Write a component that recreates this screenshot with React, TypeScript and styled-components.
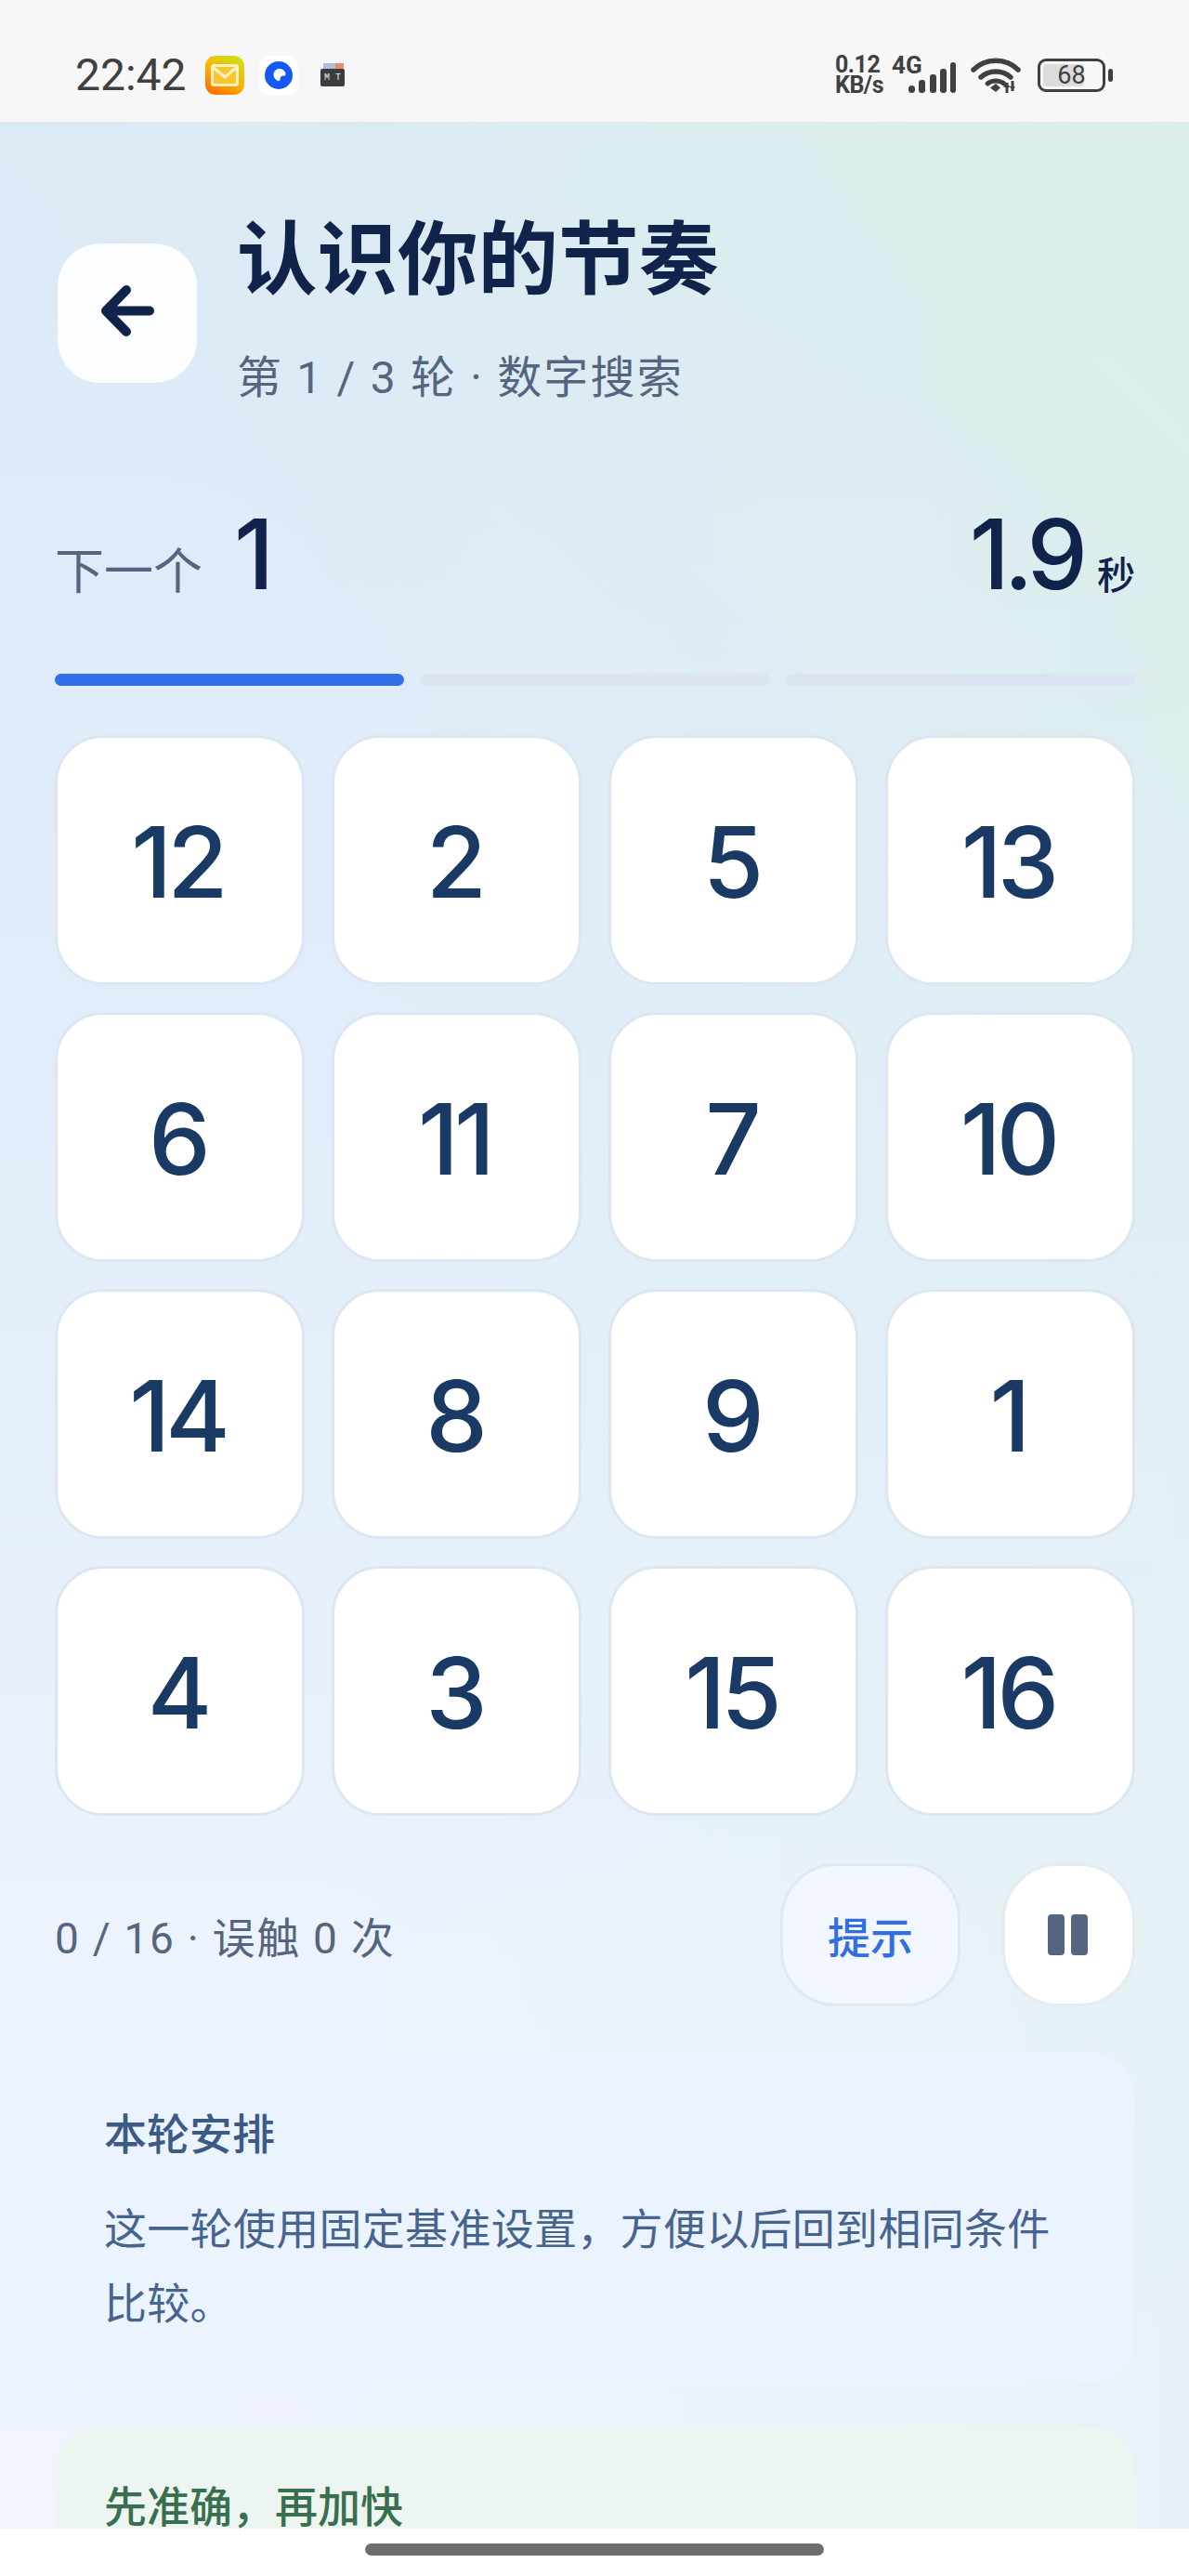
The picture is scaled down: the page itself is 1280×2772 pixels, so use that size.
import React from 'react';
import styled, { createGlobalStyle } from 'styled-components';

const TILES = [12, 2, 5, 13, 6, 11, 7, 10, 14, 8, 9, 1, 4, 3, 15, 16];

const GlobalStyle = createGlobalStyle`
  html, body {
    margin: 0;
    padding: 0;
  }
  body {
    font-family: Roboto, "Noto Sans CJK SC", sans-serif;
  }
`;

const App: React.FC = () => {
  return (
    <Screen lang="zh-CN">
      <GlobalStyle />
      <StatusBar>
        <StatusLeft>
          <Clock>22:42</Clock>
          <MailIcon>
            <svg width="30" height="24" viewBox="0 0 30 24" fill="none">
              <rect x="1.5" y="1.5" width="27" height="21" rx="2" stroke="#fff3c4" strokeWidth="3" fill="#f9c530" />
              <path d="M3 4l12 10L27 4" stroke="#fff3c4" strokeWidth="3" />
            </svg>
          </MailIcon>
          <NoticeIcon>
            <svg width="30" height="30" viewBox="0 0 30 30">
              <circle cx="15" cy="15" r="15" fill="#1459f0" />
              <path d="M15.5 8c4 0 7 2.500 7 6 0 1-1 1.500-2 1.500-2.500 0-4 1.500-4 4 0 1.500-1.500 2-2.500 1.500-3-1.500-4.500-4-4.500-6.500 0-3.500 2.500-6.500 6-6.500z" fill="#fff" />
            </svg>
          </NoticeIcon>
          <ToolIcon>
            <ToolPaper />
            <ToolLabel>M T</ToolLabel>
          </ToolIcon>
        </StatusLeft>
        <StatusRight>
          <NetSpeed>
            <span>0.12</span>
            <span>KB/s</span>
          </NetSpeed>
          <SignalWrap>
            <NetType>4G</NetType>
            <svg width="52" height="34" viewBox="0 0 52 34" fill="#404040">
              <rect x="0" y="25" width="7" height="8" rx="3.500" />
              <rect x="11" y="19" width="7" height="14" rx="3" />
              <rect x="23" y="13" width="7" height="20" rx="3" />
              <rect x="34" y="7" width="7" height="26" rx="3" />
              <rect x="45" y="0" width="6" height="33" rx="3" />
            </svg>
          </SignalWrap>
          <svg width="54" height="40" viewBox="0 0 54 40" fill="none">
            <path d="M3 14C16 1 38 1 51 14" stroke="#404040" strokeWidth="5.500" strokeLinecap="round" />
            <path d="M11 22c9-8 23-8 32 0" stroke="#404040" strokeWidth="5.500" strokeLinecap="round" />
            <path d="M18 29c5-4 13-4 18 0" stroke="#404040" strokeWidth="5" strokeLinecap="round" />
            <path d="M27 29l-6 4.500 6 4.500 5-4.500z" fill="#404040" />
            <path d="M39 28v11M45 26v11" stroke="#404040" strokeWidth="3" />
            <path d="M35 33l4-4 4 4M42 32l3 4 3-4" fill="#404040" />
          </svg>
          <Battery>
            <BatteryBody>
              <BatteryFill />
              <BatteryValue>68</BatteryValue>
            </BatteryBody>
            <BatteryNub />
          </Battery>
        </StatusRight>
      </StatusBar>

      <Main>
        <Header>
          <BackButton>
            <svg width="58" height="55" viewBox="0 0 58 55" fill="none">
              <path d="M28 5L6 27.500 28 50M6 27.500h47" stroke="#10234a" strokeWidth="10" strokeLinecap="round" strokeLinejoin="round" />
            </svg>
          </BackButton>
          <HeaderText>
            <Title>认识你的节奏</Title>
            <Subtitle>第 1 / 3 轮 · 数字搜索</Subtitle>
          </HeaderText>
        </Header>

        <TargetRow>
          <TargetGroup>
            <TargetLabel>下一个</TargetLabel>
            <BigValue>1</BigValue>
          </TargetGroup>
          <TargetGroup>
            <BigValue>1.9</BigValue>
            <Unit>秒</Unit>
          </TargetGroup>
        </TargetRow>

        <Progress>
          <ProgressStep $active />
          <ProgressStep />
          <ProgressStep />
        </Progress>

        <TileGrid>
          {TILES.map(tile => (
            <Tile key={tile}>{tile}</Tile>
          ))}
        </TileGrid>

        <ControlRow>
          <Counter>0 / 16 · 误触 0 次</Counter>
          <Controls>
            <HintButton>提示</HintButton>
            <PauseButton>
              <PauseBar />
              <PauseBar />
            </PauseButton>
          </Controls>
        </ControlRow>

        <InfoCard>
          <InfoTitle>本轮安排</InfoTitle>
          <InfoBody>这一轮使用固定基准设置，方便以后回到相同条件比较。</InfoBody>
        </InfoCard>

        <InfoCard $green>
          <InfoTitle $green>先准确，再加快</InfoTitle>
        </InfoCard>
      </Main>

      <NavBar>
        <NavPill />
      </NavBar>
    </Screen>
  );
};

export default App;

const Screen = styled.div`
  position: relative;
  width: 1280px;
  height: 2772px;
  overflow: hidden;
  background: #f2f6fc;
`;

const StatusBar = styled.div`
  display: flex;
  align-items: center;
  justify-content: space-between;
  height: 131px;
  padding: 31px 82px 0 81px;
  box-sizing: border-box;
  background: #f7f7f7;
`;

const StatusLeft = styled.div`
  display: flex;
  align-items: center;
  gap: 16px;
`;

const Clock = styled.span`
  width: 124px;
  font-family: Roboto, sans-serif;
  font-size: 48px;
  line-height: 42px;
  color: #3f3f3f;
`;

const AppIcon = styled.div`
  position: relative;
  display: flex;
  align-items: center;
  justify-content: center;
  width: 42px;
  height: 42px;
  border-radius: 11px;
  overflow: hidden;
`;

const MailIcon = styled(AppIcon)`
  background: linear-gradient(30deg, #ff7300 10%, #fbb400 50%, #c8e61e 100%);
`;

const NoticeIcon = styled(AppIcon)`
  background: #fff;
`;

const ToolIcon = styled(AppIcon)`
  background: #f5f6fa;
`;

const ToolPaper = styled.div`
  position: absolute;
  top: 8px;
  left: 11px;
  width: 22px;
  height: 12px;
  background: linear-gradient(90deg, #b3bedb 60%, #e58f70 60%);
`;

const ToolLabel = styled.div`
  position: absolute;
  left: 8px;
  top: 14px;
  width: 26px;
  height: 19px;
  border-radius: 2px;
  background: #3c3c3c;
  color: #eee;
  font-family: "Liberation Mono", monospace;
  font-size: 10px;
  line-height: 19px;
  text-align: center;
`;

const StatusRight = styled.div`
  display: flex;
  align-items: center;
`;

const NetSpeed = styled.div`
  display: flex;
  flex-direction: column;
  width: 61px;
  font-family: Roboto, sans-serif;
  font-weight: 700;
  font-size: 25px;
  line-height: 22px;
  letter-spacing: -0.5px;
  color: #404040;
`;

const SignalWrap = styled.div`
  position: relative;
  display: flex;
  margin: 6px 15px 0 18px;
`;

const NetType = styled.span`
  position: absolute;
  top: -8px;
  left: -18px;
  font-family: Roboto, sans-serif;
  font-weight: 700;
  font-size: 26px;
  line-height: 22px;
  color: #404040;
`;

const Battery = styled.div`
  display: flex;
  align-items: center;
  gap: 3px;
  margin-left: 18px;
`;

const BatteryBody = styled.div`
  position: relative;
  display: flex;
  align-items: center;
  justify-content: center;
  box-sizing: border-box;
  width: 73px;
  height: 36px;
  border: 3.5px solid #404040;
  border-radius: 9px;
`;

const BatteryFill = styled.div`
  position: absolute;
  top: 3px;
  left: 3px;
  bottom: 3px;
  width: 44px;
  border-radius: 3px;
  background: #dcdcdc;
`;

const BatteryValue = styled.span`
  position: relative;
  font-family: Roboto, sans-serif;
  font-size: 27px;
  line-height: 1;
  color: #404040;
`;

const BatteryNub = styled.div`
  width: 5px;
  height: 14px;
  border-radius: 3px;
  background: #404040;
`;

const Main = styled.main`
  height: 2641px;
  padding: 90px 58px 0 59px;
  box-sizing: border-box;
  background:
    linear-gradient(225deg, rgba(218, 239, 230, 0.65) 0%, rgba(218, 239, 230, 0) 38%),
    linear-gradient(90deg, rgba(220, 239, 234, 0) 25%, rgba(220, 239, 234, 0.35) 100%),
    linear-gradient(180deg, #dce9f7 0%, #e1edfa 40%, #ecf3fc 75%, #eff4fd 100%);
`;

const Header = styled.header`
  display: flex;
  align-items: flex-start;
  gap: 43px;
`;

const BackButton = styled.button`
  display: flex;
  align-items: center;
  justify-content: center;
  flex: none;
  width: 150px;
  height: 150px;
  margin: 41px 0 0 3px;
  padding: 0 0 5px;
  border: none;
  border-radius: 46px;
  background: #fbfdff;
`;

const HeaderText = styled.div`
  display: flex;
  flex-direction: column;
`;

const Title = styled.h1`
  margin: 2px 0 0;
  font-family: "Noto Sans CJK SC", sans-serif;
  font-size: 86.5px;
  font-weight: 700;
  line-height: 100px;
  color: #10234a;
`;

const Subtitle = styled.div`
  margin-top: 54px;
  font-size: 48px;
  line-height: 60px;
  letter-spacing: 2.2px;
  color: #55657f;
`;

const TargetRow = styled.div`
  display: flex;
  align-items: baseline;
  justify-content: space-between;
  margin-top: 101px;
  height: 116px;
`;

const TargetGroup = styled.div`
  display: flex;
  align-items: baseline;
`;

const TargetLabel = styled.span`
  margin-right: 34px;
  font-size: 53px;
  color: #55657f;
`;

const BigValue = styled.span`
  font-family: Inter, sans-serif;
  font-size: 104px;
  font-weight: 550;
  line-height: 116px;
  letter-spacing: -6px;
  color: #10234a;
`;

const Unit = styled.span`
  margin-left: 16px;
  font-size: 41px;
  font-weight: 500;
  color: #10234a;
`;

const Progress = styled.div`
  display: grid;
  grid-template-columns: repeat(3, 1fr);
  gap: 17px;
  margin-top: 71px;
`;

const ProgressStep = styled.div<{ $active?: boolean }>`
  height: 13px;
  border-radius: 7px;
  background: ${props => (props.$active ? '#316fe8' : '#dce4f2')};
`;

const TileGrid = styled.div`
  display: grid;
  grid-template-columns: repeat(4, 1fr);
  gap: 29px;
  margin-top: 53px;
`;

const Tile = styled.div`
  display: flex;
  align-items: center;
  justify-content: center;
  box-sizing: border-box;
  height: 269px;
  padding: 4px 5px 0 0;
  border: 3px solid #dce6f2;
  border-radius: 52px;
  background: #fff;
  font-family: Inter, sans-serif;
  font-size: 106px;
  font-weight: 550;
  letter-spacing: -5px;
  color: #1a3a66;
`;

const ControlRow = styled.div`
  display: flex;
  align-items: center;
  justify-content: space-between;
  margin-top: 51px;
`;

const Counter = styled.div`
  font-size: 46px;
  letter-spacing: 1.7px;
  color: #55657f;
`;

const Controls = styled.div`
  display: flex;
  gap: 45px;
`;

const HintButton = styled.button`
  width: 194px;
  height: 154px;
  padding: 0;
  border: 3px solid #dfe8f4;
  border-radius: 60px;
  background: #f2f6fd;
  font-family: "Noto Sans CJK SC", sans-serif;
  font-size: 46px;
  font-weight: 500;
  color: #316fe0;
`;

const PauseButton = styled.button`
  display: flex;
  align-items: center;
  justify-content: center;
  gap: 7px;
  width: 143px;
  height: 154px;
  padding: 0 2px 0 0;
  border: 3px solid #e3ebf5;
  border-radius: 60px;
  background: #fff;
`;

const PauseBar = styled.span`
  width: 18px;
  height: 44px;
  border-radius: 4px;
  background: #536580;
`;

const InfoCard = styled.section<{ $green?: boolean }>`
  height: ${props => (props.$green ? '200px' : '357px')};
  margin-top: ${props => (props.$green ? '46px' : '49px')};
  padding: ${props => (props.$green ? '48px' : '50px')} 52px 0 53px;
  box-sizing: border-box;
  border-radius: 50px;
  background: ${props => (props.$green ? '#ecf5f0' : '#ebf3fe')};
`;

const InfoTitle = styled.div<{ $green?: boolean }>`
  font-family: "Noto Sans CJK SC", sans-serif;
  font-size: 46px;
  font-weight: 500;
  line-height: 70px;
  color: ${props => (props.$green ? '#38704f' : '#3c5a86')};
`;

const InfoBody = styled.p`
  margin: 27px 0 0;
  font-family: "Noto Sans CJK SC", sans-serif;
  font-size: 46px;
  line-height: 80px;
  letter-spacing: 0.3px;
  color: #47648f;
`;

const NavBar = styled.div`
  position: absolute;
  left: 0;
  right: 0;
  bottom: 0;
  display: flex;
  justify-content: center;
  height: 51px;
  padding-top: 16px;
  box-sizing: border-box;
  background: #fff;
`;

const NavPill = styled.div`
  width: 494px;
  height: 13px;
  border-radius: 7px;
  background: #6e6e6e;
`;
